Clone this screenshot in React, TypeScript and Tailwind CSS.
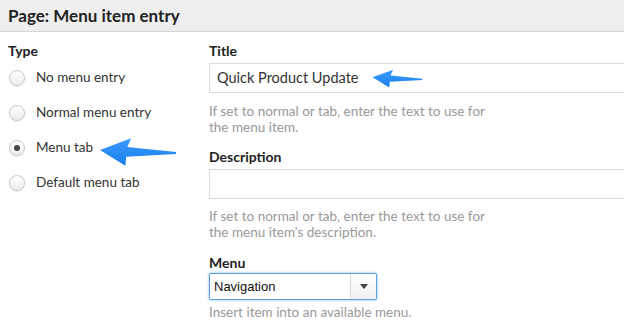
const font = { fontFamily: 'Lato, "Open Sans", sans-serif' }

function Radio({ checked }: { checked?: boolean }) {
  return (
    <span className="flex h-[16px] w-[16px] items-center justify-center rounded-full border border-[#c8c8c8] bg-gradient-to-b from-white to-[#ececec] shadow-[0_1px_1px_rgba(0,0,0,0.08)]">
      {checked && <span className="h-[6px] w-[6px] rounded-full bg-[#444]" />}
    </span>
  )
}

function Arrow({ className }: { className: string }) {
  return (
    <svg viewBox="0 0 80 30" className={className}>
      <defs>
        <linearGradient id="ag" x1="0" y1="0" x2="0" y2="1">
          <stop offset="0" stopColor="#3a9bff" />
          <stop offset="1" stopColor="#1a7fe8" />
        </linearGradient>
      </defs>
      <path d="M1 14 L33 2 L29 11 L79 16 L79 18 L28 21 L27 30 Z" fill="url(#ag)" />
    </svg>
  )
}

const options = ["No menu entry", "Normal menu entry", "Menu tab", "Default menu tab"]

export default function App() {
  return (
    <div className="relative h-[322px] w-[624px] overflow-hidden bg-white text-[#333]" style={font}>
      <div className="flex h-[32px] items-center border-b border-[#d6d6d6] bg-[#eeeeee] pl-[8px]">
        <h1 className="text-[17px] font-bold text-[#222]">Page: Menu item entry</h1>
      </div>

      <div className="flex pt-[9px]">
        <div className="w-[209px] pl-[8px]">
          <div className="text-[14px] font-bold leading-[20px] text-[#222]">Type</div>
          <div className="mt-[-1px] flex flex-col">
            {options.map((o, i) => (
              <label key={o} className="flex h-[35px] items-center gap-[11px] pl-[1px] text-[13.5px] text-[#333]">
                <Radio checked={i === 2} />
                <span>{o}</span>
              </label>
            ))}
          </div>
        </div>

        <div className="flex-1">
          <div className="text-[14px] font-bold leading-[20px] text-[#222]">Title</div>
          <div className="mt-[2px] flex h-[30px] items-center border border-r-0 border-[#dcdcdc] pl-[7px] text-[14.5px] text-[#333]">
            Quick Product Update
          </div>
          <p className="mt-[10px] w-[285px] text-[13.5px] leading-[16px] text-[#999]">
            If set to normal or tab, enter the text to use for the menu item.
          </p>

          <div className="mt-[12px] text-[14px] font-bold leading-[20px] text-[#222]">Description</div>
          <div className="mt-[2px] h-[30px] border border-r-0 border-[#dcdcdc]" />
          <p className="mt-[9px] w-[285px] text-[13.5px] leading-[16px] text-[#999]">
            If set to normal or tab, enter the text to use for the menu item's description.
          </p>

          <div className="mt-[13px] text-[14px] font-bold leading-[20px] text-[#222]">Menu</div>
          <div className="flex h-[27px] w-[168px] items-stretch rounded-[2px] border border-[#5a9ee6] bg-white shadow-[0_0_3px_#7fb6f0]">
            <span className="flex flex-1 items-center pl-[4px] text-[13px] text-[#111]" style={{ fontFamily: '"Liberation Sans", Arial, sans-serif' }}>
              Navigation
            </span>
            <span className="flex w-[26px] items-center justify-center border-l border-[#d8d8d8] bg-gradient-to-b from-white to-[#f0f0f0]">
              <svg viewBox="0 0 8 5" className="h-[5px] w-[8px]"><path d="M0 0 H8 L4 5 Z" fill="#444" /></svg>
            </span>
          </div>
          <p className="mt-[4px] text-[13.5px] leading-[16px] text-[#999]">Insert item into an available menu.</p>
        </div>
      </div>

      <Arrow className="absolute left-[99px] top-[136px] h-[30px] w-[78px]" />
      <Arrow className="absolute left-[372px] top-[68px] h-[20px] w-[51px]" />
    </div>
  )
}
